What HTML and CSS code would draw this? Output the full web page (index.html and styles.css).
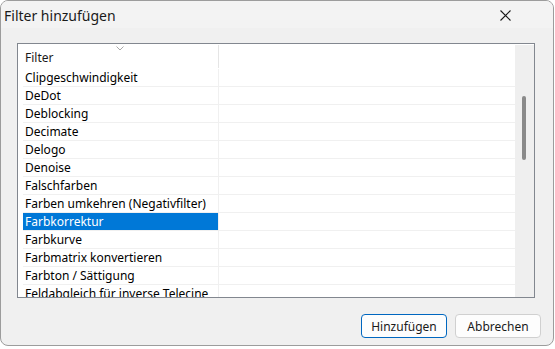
FILE: index.html
```html
<!DOCTYPE html>
<html lang="de">
<head>
<meta charset="utf-8">
<title>Filter hinzufügen</title>
<link rel="stylesheet" href="styles.css">
</head>
<body>
<div class="window">
  <div class="titlebar">
    <span class="title">Filter hinzufügen</span>
    <svg class="close" width="11" height="11" viewBox="0 0 11 11"><path d="M0.5 0.5 L10.5 10.5 M10.5 0.5 L0.5 10.5" stroke="#1a1a1a" stroke-width="1.1" fill="none"/></svg>
  </div>
  <div class="client">
    <div class="listbox">
      <div class="list">
        <div class="header">
          <div class="hcell">Filter
            <svg class="chev" width="8" height="5" viewBox="0 0 8 5"><path d="M0.5 0.5 L4 4 L7.5 0.5" stroke="#a8a8a8" stroke-width="1" fill="none"/></svg>
          </div>
        </div>
        <div class="rows">
          <div class="row"><div class="cell">Clipgeschwindigkeit</div></div>
          <div class="row"><div class="cell">DeDot</div></div>
          <div class="row"><div class="cell">Deblocking</div></div>
          <div class="row"><div class="cell">Decimate</div></div>
          <div class="row"><div class="cell">Delogo</div></div>
          <div class="row"><div class="cell">Denoise</div></div>
          <div class="row"><div class="cell">Falschfarben</div></div>
          <div class="row"><div class="cell">Farben umkehren (Negativfilter)</div></div>
          <div class="row selected"><div class="cell">Farbkorrektur</div></div>
          <div class="row"><div class="cell">Farbkurve</div></div>
          <div class="row"><div class="cell">Farbmatrix konvertieren</div></div>
          <div class="row"><div class="cell">Farbton / Sättigung</div></div>
          <div class="row"><div class="cell">Feldabgleich für inverse Telecine</div></div>
        </div>
      </div>
      <div class="scrollbar"><div class="thumb"></div></div>
    </div>
    <div class="buttons">
      <button class="btn primary">Hinzufügen</button>
      <button class="btn">Abbrechen</button>
    </div>
  </div>
</div>
</body>
</html>
```
FILE: styles.css
```css
html, body {
  margin: 0;
  padding: 0;
  background: #ffffff;
}
body {
  font-family: "Noto Sans", "DejaVu Sans", sans-serif;
  font-size: 12px;
  color: #000;
}
.window {
  box-sizing: border-box;
  width: 554px;
  height: 346px;
  border: 1px solid #9c9c9c;
  border-radius: 8px;
  overflow: hidden;
  background: #f0f0f0;
  display: flex;
  flex-direction: column;
}
.titlebar {
  height: 27px;
  flex: none;
  background: #f3f3f3;
  display: flex;
  align-items: center;
  justify-content: space-between;
  padding: 0 42px 0 3px;
}
.title {
  font-size: 14px;
  color: #1a1a1a;
  margin-top: 1px;
}
.close {
  display: block;
  margin-top: 1px;
}
.client {
  flex: 1;
  padding: 15px 12px 0 16px;
  display: flex;
  flex-direction: column;
}
.listbox {
  box-sizing: border-box;
  width: 518px;
  height: 255px;
  border: 1px solid #82878f;
  background: #ffffff;
  display: flex;
  overflow: hidden;
}
.list {
  width: 497px;
  flex: none;
  display: flex;
  flex-direction: column;
}
.header {
  height: 25px;
  flex: none;
  display: flex;
}
.hcell {
  position: relative;
  box-sizing: border-box;
  width: 201px;
  padding: 1px 0 0 7px;
  line-height: 23px;
  border-right: 1px solid #e5e5e5;
  margin: 1px 0 1px 0;
  color: #1a1a1a;
}
.chev {
  position: absolute;
  left: 98px;
  top: 1px;
}
.rows {
  display: flex;
  flex-direction: column;
}
.row {
  height: 17px;
  flex: none;
  margin-left: 5px;
  border-bottom: 1px solid #f0f0f0;
  display: flex;
}
.cell {
  box-sizing: border-box;
  width: 196px;
  padding: 1px 0 0 2px;
  line-height: 16px;
  white-space: nowrap;
  border-right: 1px solid #f0f0f0;
  overflow: visible;
}
.row.selected .cell {
  background: #0078d7;
  color: #ffffff;
}
.scrollbar {
  flex: 1;
  background: #efefef;
  margin-top: 1px;
  position: relative;
}
.thumb {
  position: absolute;
  left: 7px;
  top: 51px;
  width: 4px;
  height: 64px;
  border-radius: 2px;
  background: #8a8a8a;
}
.buttons {
  display: flex;
  justify-content: flex-end;
  gap: 8px;
  margin-top: 16px;
}
.btn {
  box-sizing: border-box;
  width: 86px;
  height: 24px;
  font-family: inherit;
  font-size: 12px;
  color: #1a1a1a;
  background: #fdfdfd;
  border: 1px solid #d0d0d0;
  border-radius: 4px;
  padding: 0;
}
.btn.primary {
  border-color: #0067c0;
}
```
